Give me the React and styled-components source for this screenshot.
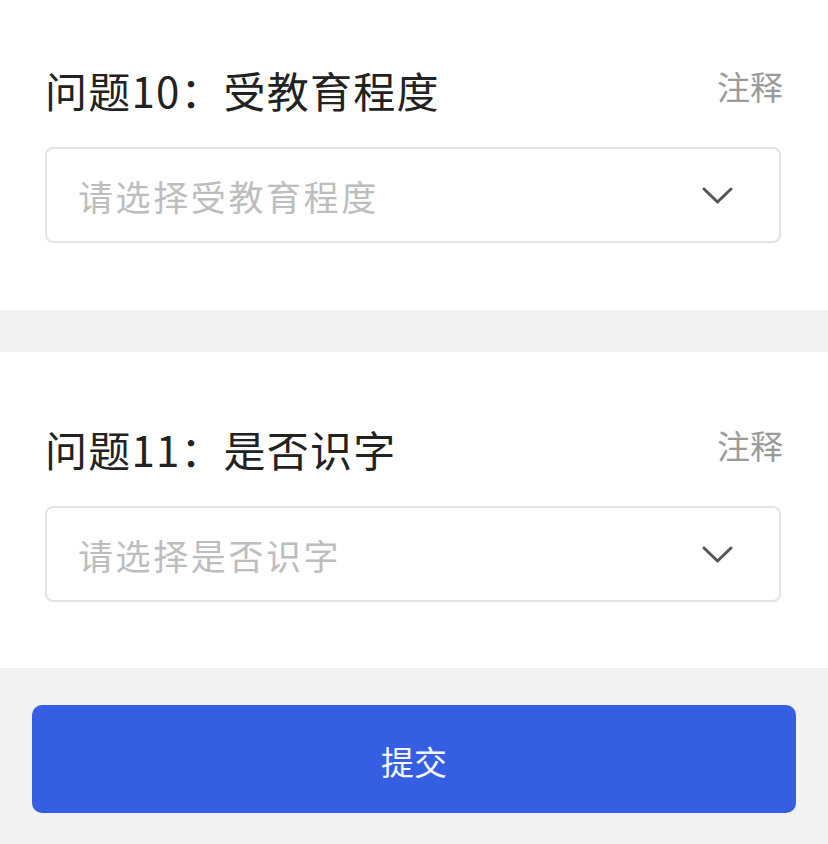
import React from "react";
import styled, { createGlobalStyle } from "styled-components";

const Global = createGlobalStyle`
  html, body { margin: 0; padding: 0; background: #f2f2f2; }
  body { font-family: "Noto Sans CJK SC", "Noto Sans", sans-serif; }
`;

const Page = styled.div`
  width: 828px;
  height: 844px;
  display: flex;
  flex-direction: column;
  background: #f2f2f2;
  overflow: hidden;
`;

const Section = styled.section`
  background: #ffffff;
  padding: ${(p) => p.$top}px 47px ${(p) => p.$bottom}px 45px;
  margin-bottom: ${(p) => p.$gap}px;
`;

const TitleRow = styled.div`
  display: flex;
  justify-content: space-between;
  align-items: flex-start;
`;

const Title = styled.h2`
  margin: 0;
  font-size: 42px;
  line-height: 46px;
  font-weight: 400;
  color: #222;
  letter-spacing: 1.2px;
`;

const Note = styled.span`
  margin-top: 3px;
  font-size: 33px;
  line-height: 32px;
  color: #9a9a9a;
  margin-right: -2px;
`;

const Select = styled.div`
  margin-top: 34px;
  height: 96px;
  box-sizing: border-box;
  border: 2px solid #e3e3e3;
  border-radius: 8px;
  display: flex;
  align-items: center;
  justify-content: space-between;
  padding: 0 46px 0 31px;
`;

const Placeholder = styled.span`
  font-size: 35px;
  color: #bdbdbd;
  letter-spacing: 2.6px;
`;

const Footer = styled.div`
  flex: 1;
  padding: 37px 32px 0;
`;

const Button = styled.button`
  width: 100%;
  height: 108px;
  border: none;
  border-radius: 10px;
  background: #355ee3;
  color: #f4f6ff;
  font-family: inherit;
  font-size: 33px;
  padding-top: 4px;
  display: flex;
  align-items: center;
  justify-content: center;
`;

const Chevron = () => (
  <svg width="31" height="17" viewBox="0 0 31 17" fill="none">
    <polyline points="2,2 15.5,15 29,2" stroke="#555" strokeWidth="3" strokeLinecap="round" strokeLinejoin="round" />
  </svg>
);

const questions = [
  { title: "问题10：受教育程度", placeholder: "请选择受教育程度", top: 67, bottom: 67, gap: 42 },
  { title: "问题11：是否识字", placeholder: "请选择是否识字", top: 74, bottom: 66, gap: 0 },
];

export default function App() {
  return (
    <Page>
      <Global />
      {questions.map((q) => (
        <Section key={q.title} $top={q.top} $bottom={q.bottom} $gap={q.gap}>
          <TitleRow>
            <Title>{q.title}</Title>
            <Note>注释</Note>
          </TitleRow>
          <Select>
            <Placeholder>{q.placeholder}</Placeholder>
            <Chevron />
          </Select>
        </Section>
      ))}
      <Footer>
        <Button>提交</Button>
      </Footer>
    </Page>
  );
}
